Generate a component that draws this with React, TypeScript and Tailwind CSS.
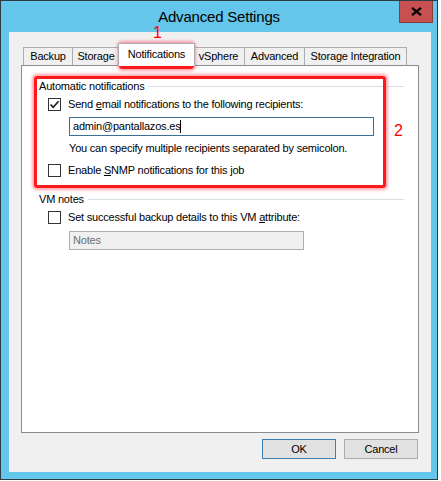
import React from "react";

const tabs = [
    { name: "Backup", w: "w-[50px]" },
    { name: "Storage", w: "w-[48px] -ml-px" },
    { name: "Notifications", w: "w-[77px] -ml-[2px]" },
    { name: "vSphere", w: "w-[53px] -ml-[3px]" },
    { name: "Advanced", w: "w-[61px] -ml-px" },
    { name: "Storage Integration", w: "w-[103px] -ml-px" },
];

function CheckBox({ checked }: { checked?: boolean }) {
    return (
        <span className="w-[13px] h-[13px] border border-[#333333] bg-white flex items-center justify-center shrink-0">
            {checked && (
                <svg width="11" height="11" viewBox="0 0 11 11">
                    <path d="M1.5 5.5 L4.2 8.2 L9.6 2.2" fill="none" stroke="#222" strokeWidth="1.7" />
                </svg>
            )}
        </span>
    );
}

export default function App() {
    return (
        <div className="relative w-[441px] h-[481px] bg-white text-black text-[11px] tracking-[-0.2px] font-['Liberation_Sans',Arial,sans-serif]">
            {/* window frame */}
            <div className="w-[438px] h-[480px] border border-[#2b3a45] bg-[#63c6ea] flex flex-col">
                {/* title bar */}
                <div className="relative h-[31px] flex items-center justify-center text-[15px] tracking-[-0.2px] pt-[2px]">
                    Advanced Settings
                    <div className="absolute top-0 right-[4px] w-[34px] h-[22px] bg-[#c75050] border border-[#8a3c3c] border-t-0 flex items-center justify-center">
                        <svg width="11" height="9" viewBox="0 0 11 9">
                            <path d="M1 0.8 L10 8.2 M10 0.8 L1 8.2" stroke="#000" strokeWidth="2.2" />
                        </svg>
                    </div>
                </div>

                {/* client area */}
                <div className="ml-[8px] mr-[6px] h-[440px] bg-[#f0f0f0] flex flex-col">
                    {/* tabs */}
                    <div className="mt-[11px] ml-[14px] h-[22px] flex items-end">
                        {tabs.map((t) =>
                            t.name === "Notifications" ? (
                                <div
                                    key={t.name}
                                    className={`relative z-10 mb-[-1px] h-[23px] bg-white border border-b-0 border-[#acacac] flex justify-center pt-[2px] ${t.w}`}
                                >
                                    {t.name}
                                </div>
                            ) : (
                                <div
                                    key={t.name}
                                    className={`h-[18px] bg-[#f0f0f0] border border-b-0 border-[#acacac] flex items-center justify-center ${t.w}`}
                                >
                                    {t.name}
                                </div>
                            )
                        )}
                    </div>

                    {/* panel */}
                    <div className="ml-[12px] w-[398px] h-[368px] bg-white border border-[#898c95] pt-[13px] pl-[17px] pr-[14px]">
                        {/* Automatic notifications */}
                        <div className="flex items-center h-[15px] leading-[15px]">
                            <span>Automatic notifications</span>
                            <div className="flex-1 ml-[4px] h-px bg-[#d5dfe5]" />
                        </div>
                        <div className="mt-[3px] ml-[9px] flex items-center gap-[7px] h-[15px] leading-[15px]">
                            <CheckBox checked />
                            <span>
                                Send <u>e</u>mail notifications to the following recipients:
                            </span>
                        </div>
                        <div className="mt-[5px] ml-[30px] w-[305px] h-[19px] border border-[#3d6f94] bg-white flex items-center pl-[3px] leading-[15px]">
                            admin@pantallazos.es
                            <span className="w-px h-[13px] bg-black" />
                        </div>
                        <div className="mt-[5px] ml-[30px] h-[15px] leading-[15px]">
                            You can specify multiple recipients separated by semicolon.
                        </div>
                        <div className="mt-[7px] ml-[9px] flex items-center gap-[7px] h-[15px] leading-[15px]">
                            <CheckBox />
                            <span>
                                Enable <u>S</u>NMP notifications for this job
                            </span>
                        </div>

                        {/* VM notes */}
                        <div className="mt-[14px] flex items-center h-[15px] leading-[15px]">
                            <span>VM notes</span>
                            <div className="flex-1 ml-[4px] h-px bg-[#d5dfe5]" />
                        </div>
                        <div className="mt-[3px] ml-[9px] flex items-center gap-[7px] h-[15px] leading-[15px]">
                            <CheckBox />
                            <span>
                                Set successful backup details to this VM <u>a</u>ttribute:
                            </span>
                        </div>
                        <div className="mt-[6px] ml-[30px] w-[235px] h-[19px] border border-[#adadad] bg-[#f0f0f0] flex items-center pl-[3px] text-[#6d6d6d]">
                            Notes
                        </div>
                    </div>

                    {/* buttons */}
                    <div className="mt-[6px] mr-[13px] flex justify-end gap-[8px]">
                        <button className="w-[74px] h-[20px] bg-[#e1e1e1] border border-[#3c7fb1] flex items-center justify-center">
                            OK
                        </button>
                        <button className="w-[74px] h-[20px] bg-[#e1e1e1] border border-[#adadad] flex items-center justify-center">
                            Cancel
                        </button>
                    </div>
                </div>
            </div>

            {/* annotations */}
            <div className="absolute left-[119px] top-[43px] w-[75px] h-[26px] border-[3px] border-[#ff1a1a] rounded-[3px] shadow-[0_0_3px_2px_rgba(255,90,110,0.55)]" />
            <div className="absolute left-[153px] top-[24px] text-[16px] leading-[18px] text-[#ff0000]">1</div>
            <div className="absolute left-[34px] top-[76px] w-[352px] h-[112px] border-[3px] border-[#ff1a1a] rounded-[3px] shadow-[0_0_3px_2px_rgba(255,90,110,0.55)]" />
            <div className="absolute left-[394px] top-[122px] text-[16px] leading-[18px] text-[#ff0000]">2</div>
        </div>
    );
}
